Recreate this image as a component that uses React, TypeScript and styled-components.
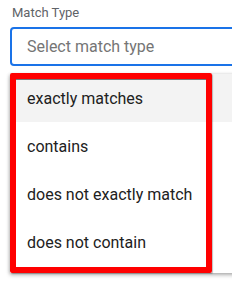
import React from "react";
import styled, { createGlobalStyle } from "styled-components";

const GlobalStyle = createGlobalStyle`
  html, body {
    margin: 0;
    padding: 0;
    background: #fff;
    overflow: hidden;
  }
  body {
    font-family: Roboto, "Liberation Sans", Arial, sans-serif;
  }
`;

const Page = styled.div`
  width: 232px;
  height: 283px;
  overflow: hidden;
  background: #fff;
`;

const Field = styled.div`
  width: 300px;
  padding: 5px 0 0 10px;
  display: flex;
  flex-direction: column;
`;

const Label = styled.label`
  font-size: 13px;
  color: #5f6368;
  margin-left: 2px;
  line-height: 16px;
  height: 22px;
`;

const Input = styled.div`
  height: 35px;
  border: 2px solid #1a73e8;
  border-radius: 4px;
  display: flex;
  align-items: center;
  padding-left: 15px;
  font-size: 16px;
  color: #757575;
`;

const Menu = styled.div`
  position: relative;
  margin-top: 8px;
  padding-bottom: 7px;
  background: #fff;
  box-shadow: 0 2px 4px rgba(0, 0, 0, 0.3), -1px 0 3px rgba(0, 0, 0, 0.12);
  display: flex;
  flex-direction: column;
`;

const Option = styled.div<{ $active?: boolean }>`
  height: 48px;
  display: flex;
  align-items: center;
  padding-left: 17px;
  font-size: 16px;
  color: #212121;
  background: ${(p) => (p.$active ? "#f3f3f3" : "#fff")};
`;

const Highlight = styled.div`
  position: absolute;
  left: 0;
  top: -1px;
  width: 202px;
  bottom: 0;
  box-sizing: border-box;
  border: 6px solid #ff0000;
  border-radius: 2px;
  box-shadow: inset 0 1px 0 #777, 1px 1px 1px rgba(0, 0, 0, 0.25);
  pointer-events: none;
`;

const options = [
  "exactly matches",
  "contains",
  "does not exactly match",
  "does not contain",
];

export default function App() {
  return (
    <Page>
      <GlobalStyle />
      <Field>
        <Label>Match Type</Label>
        <Input>Select match type</Input>
        <Menu>
          {options.map((o, i) => (
            <Option key={o} $active={i === 0}>
              {o}
            </Option>
          ))}
          <Highlight />
        </Menu>
      </Field>
    </Page>
  );
}
